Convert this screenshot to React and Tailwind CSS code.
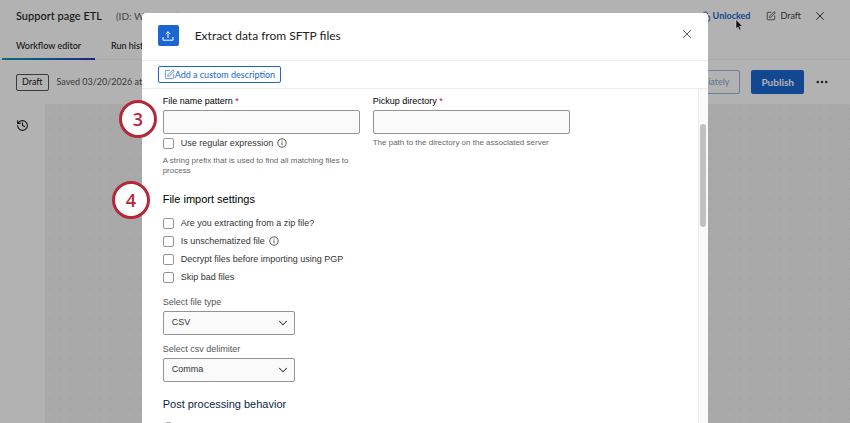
import React, { useState } from 'react';
import { X, ChevronDown, History, SquarePen, LockOpen } from 'lucide-react';

const UploadIcon = () => (
    <svg width="12" height="12" viewBox="0 0 12 12" fill="none" stroke="white" strokeWidth="1" strokeLinecap="round" strokeLinejoin="round">
        <path d="M6 7.5V2M4 3.8L6 1.8l2 2" />
        <path d="M1 7.5v2.7h10V7.5" />
    </svg>
);

const InfoIcon = () => (
    <svg width="10" height="10" viewBox="0 0 10 10" fill="none" stroke="#444" strokeWidth="0.9">
        <circle cx="5" cy="5" r="4.2" />
        <path d="M5 4.4v2.8M5 2.6v1" />
    </svg>
);

const DotsIcon = () => (
    <svg width="12" height="4" viewBox="0 0 12 4" fill="#333">
        <circle cx="1.8" cy="2" r="1.3" />
        <circle cx="6" cy="2" r="1.3" />
        <circle cx="10.2" cy="2" r="1.3" />
    </svg>
);

const Cursor = () => (
    <svg width="9" height="12" viewBox="0 0 9 12" className="absolute left-[735px] top-[19px]">
        <path d="M1 0.5v9.2l2-1.8 1.4 3.3 1.6-.7-1.4-3.2h2.9z" fill="#111" stroke="#ddd" strokeWidth="0.5" />
    </svg>
);

const Check = ({ id, label, info }) => (
    <div className="flex items-center gap-[7px]">
        <input
            id={id}
            type="checkbox"
            className="h-[11px] w-[11px] appearance-none rounded-xs border border-[#949494] bg-white checked:bg-[#1b66d2]"
        />
        <label htmlFor={id} className="flex items-center gap-1 text-[9px] leading-3 text-[#333]">
            {label}
            {info && <InfoIcon />}
        </label>
    </div>
);

const TextField = ({ id, label, children }) => (
    <div className="w-[197px]">
        <label htmlFor={id} className="block text-[9px] leading-3 text-black">
            {label} <span className="text-[#d0021b]">*</span>
        </label>
        <input
            id={id}
            type="text"
            className="mt-[3px] block h-6 w-full rounded-xs border border-[#949494] bg-[#fafafa] px-2 text-[9px] outline-none"
        />
        {children}
    </div>
);

const SelectField = ({ id, label, options }) => (
    <div className="w-[132px]">
        <label htmlFor={id} className="block text-[9px] leading-3 text-[#555]">{label}</label>
        <div className="relative mt-[3px]">
            <select
                id={id}
                className="block h-6 w-full appearance-none rounded-xs border border-[#949494] bg-[#fafafa] px-2 text-[9px] text-[#333] outline-none"
            >
                {options.map((o) => <option key={o}>{o}</option>)}
            </select>
            <ChevronDown size={14} strokeWidth={1.8} className="pointer-events-none absolute right-[5px] top-[5px] text-[#333]" />
        </div>
    </div>
);

const Step = ({ children, place }) => (
    <div className={`absolute ${place} flex h-[38px] w-[38px] items-center justify-center rounded-full border-3 border-[#b5283a] bg-white font-['Open_Sans',sans-serif] text-lg font-semibold text-[#b5283a]`}>
        {children}
    </div>
);

const Editor = () => (
    <div className="flex min-h-screen flex-col bg-white font-['Lato',sans-serif] text-[9px] text-[#222]">
        <header className="flex h-8 items-center px-4">
            <h1 className="text-[11px] font-medium">Support page ETL</h1>
            <span className="ml-[14px] text-[10px] text-[#666]">(ID: WF-1024)</span>
            <div className="ml-auto flex items-center">
                <button className="flex items-center gap-[2px] font-bold text-[#1b66d2]">
                    <LockOpen size={11} /> Unlocked
                </button>
                <span className="ml-4 flex items-center gap-1 text-[#444]">
                    <SquarePen size={10} /> Draft
                </span>
                <button aria-label="Close editor" className="ml-3 mr-[7px]">
                    <X size={14} strokeWidth={1.5} />
                </button>
            </div>
        </header>
        <nav className="flex h-7 border-b border-[#f0f0f0] pl-[2px]">
            <button className="relative w-[93px] text-center font-medium">
                Workflow editor
                <span className="absolute inset-x-0 -bottom-px h-[2px] bg-linear-to-r from-[#0a9fb0] to-[#2a2fc0]" />
            </button>
            <button className="ml-4 font-medium">Run history</button>
        </nav>
        <div className="flex h-11 items-center pl-4 pr-[22px]">
            <span className="flex h-[17px] items-center rounded-xs border border-[#555] px-[5px]">Draft</span>
            <span className="ml-2 text-[#555]">Saved 03/20/2026 at 10:42</span>
            <button className="ml-auto h-6 rounded-xs border border-[#9fb3dc] px-[10px] text-[#8fa5d8]">Run immediately</button>
            <button className="ml-[11px] h-6 rounded-xs bg-[#1b66d2] px-[10px] text-[10px] font-bold text-white">Publish</button>
            <button aria-label="More" className="ml-3">
                <DotsIcon />
            </button>
        </div>
        <div className="flex flex-1">
            <aside className="w-[45px] pl-4 pt-[15px]">
                <button aria-label="Version history"><History size={13} strokeWidth={2} /></button>
            </aside>
            <main className="flex-1 bg-[#f2f2f2] bg-[radial-gradient(#ebebeb_1px,transparent_1px)] bg-size-[10px_10px]" />
        </div>
    </div>
);

const App = () => {
    const [open, setOpen] = useState(true);

    return (
        <div className="relative h-screen overflow-hidden">
            <Editor />
            {open && (
                <div className="absolute inset-0 flex justify-center bg-black/30 pt-[13px]">
                    <div role="dialog" aria-labelledby="dialog-title" className="flex w-2/3 flex-col overflow-hidden rounded-t-sm bg-white">
                        <div className="flex h-12 shrink-0 items-center border-b border-[#ececec] pb-[2px] pl-4 pr-[14px] font-['Lato',sans-serif]">
                            <span className="flex h-[21px] w-[21px] items-center justify-center rounded-xs bg-[#1b66d2]">
                                <UploadIcon />
                            </span>
                            <h2 id="dialog-title" className="ml-4 text-xs text-[#222]">Extract data from SFTP files</h2>
                            <button aria-label="Close" onClick={() => setOpen(false)} className="mb-1 ml-auto">
                                <X size={14} strokeWidth={1.5} className="text-[#444]" />
                            </button>
                        </div>
                        <div className="flex h-7 shrink-0 items-center border-b border-[#ececec] px-4">
                            <button className="flex h-[17px] items-center rounded-xs border border-[#1b66d2] px-[5px] font-['Lato',sans-serif] text-[9px] text-[#1b66d2]">
                                <SquarePen size={11} strokeWidth={1.5} /> Add a custom description
                            </button>
                        </div>
                        <div className="flex min-h-0 flex-1 font-['Liberation_Sans',Arial,sans-serif]">
                            <form className="flex-1 overflow-hidden px-[21px] pt-[6px]">
                                <div className="flex gap-[13px]">
                                    <TextField id="pattern" label="File name pattern">
                                        <div className="mt-[3px]">
                                            <Check id="regex" label="Use regular expression" info />
                                        </div>
                                        <p className="mt-[7px] text-[8px] leading-[10px] text-[#666]">
                                            A string prefix that is used to find all matching files to process
                                        </p>
                                    </TextField>
                                    <TextField id="directory" label="Pickup directory">
                                        <p className="mt-1 text-[8px] leading-[10px] text-[#666]">
                                            The path to the directory on the associated server
                                        </p>
                                    </TextField>
                                </div>
                                <h3 className="mt-[15px] text-[11px] leading-4 text-black">File import settings</h3>
                                <div className="mt-[10px] flex flex-col gap-[6px]">
                                    <Check id="zip" label="Are you extracting from a zip file?" />
                                    <Check id="schema" label="Is unschematized file" info />
                                    <Check id="pgp" label="Decrypt files before importing using PGP" />
                                    <Check id="skip" label="Skip bad files" />
                                </div>
                                <div className="mt-[13px] flex flex-col gap-2">
                                    <SelectField id="type" label="Select file type" options={['CSV', 'JSON', 'XML']} />
                                    <SelectField id="delimiter" label="Select csv delimiter" options={['Comma', 'Tab', 'Pipe']} />
                                </div>
                                <h3 className="mt-[14px] text-[11px] leading-4 text-[#0b1f44]">Post processing behavior</h3>
                                <input
                                    type="radio"
                                    name="post"
                                    aria-label="Keep files"
                                    className="mt-[10px] block h-[11px] w-[11px] appearance-none rounded-full border border-[#949494]"
                                />
                            </form>
                            <div className="w-[10px] border-l border-[#ececec] bg-[#fafafa] pl-px pt-[35px]">
                                <div className="h-[103px] w-[6px] rounded-full bg-[#c1c1c1]" />
                            </div>
                        </div>
                    </div>
                </div>
            )}
            <Step place="left-[119px] top-[100px]">3</Step>
            <Step place="left-[112px] top-[181px]">4</Step>
            <Cursor />
        </div>
    );
};

export default App;
